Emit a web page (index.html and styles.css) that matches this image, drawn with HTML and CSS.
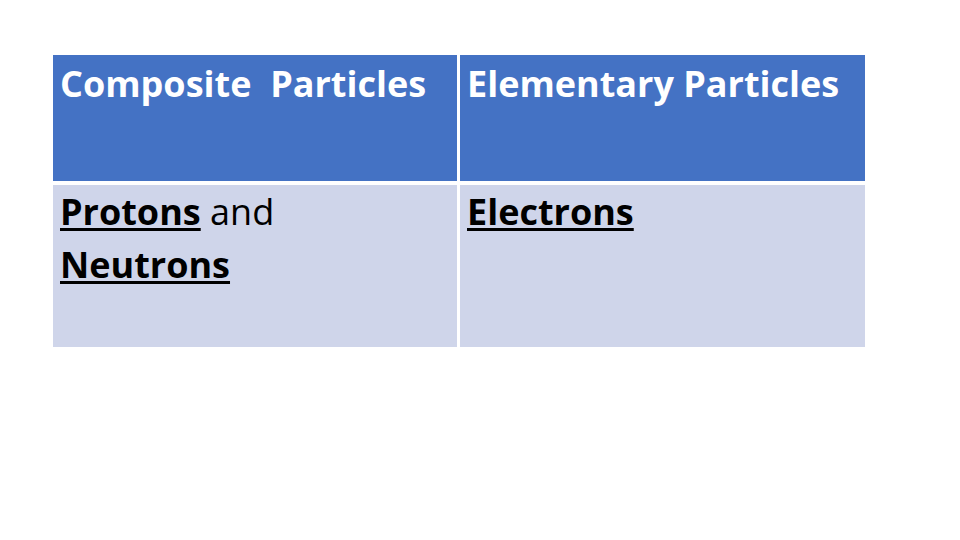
FILE: index.html
```html
<!DOCTYPE html>
<html lang="en">
<head>
<meta charset="utf-8">
<title>Particles</title>
<link rel="stylesheet" href="styles.css">
</head>
<body>
<div class="slide">
  <div class="table">
    <div class="cell head">Composite&nbsp; Particles</div>
    <div class="cell head">Elementary Particles</div>
    <div class="cell body"><span class="term">Protons</span> and<br><span class="term">Neutrons</span></div>
    <div class="cell body"><span class="term">Electrons</span></div>
  </div>
</div>
</body>
</html>
```
FILE: styles.css
```css
html, body {
  margin: 0;
  padding: 0;
  background: #ffffff;
}
.slide {
  width: 960px;
  height: 540px;
  padding: 55px 0 0 53px;
  box-sizing: border-box;
  font-family: "Open Sans", Lato, "Liberation Sans", sans-serif;
}
.table {
  display: grid;
  grid-template-columns: 404px 405px;
  grid-template-rows: 126px 162px;
  column-gap: 3px;
  row-gap: 4px;
}
.cell {
  box-sizing: border-box;
  padding-left: 7px;
  font-size: 36px;
  white-space: nowrap;
}
.head {
  background: #4472c4;
  color: #ffffff;
  font-weight: 700;
  padding-top: 7px;
  line-height: 1.2;
}
.body {
  background: #cfd5ea;
  color: #000000;
  line-height: 53px;
}
.term {
  font-weight: 700;
  text-decoration: underline;
  text-decoration-thickness: 3px;
  text-underline-offset: 3px;
}
```
